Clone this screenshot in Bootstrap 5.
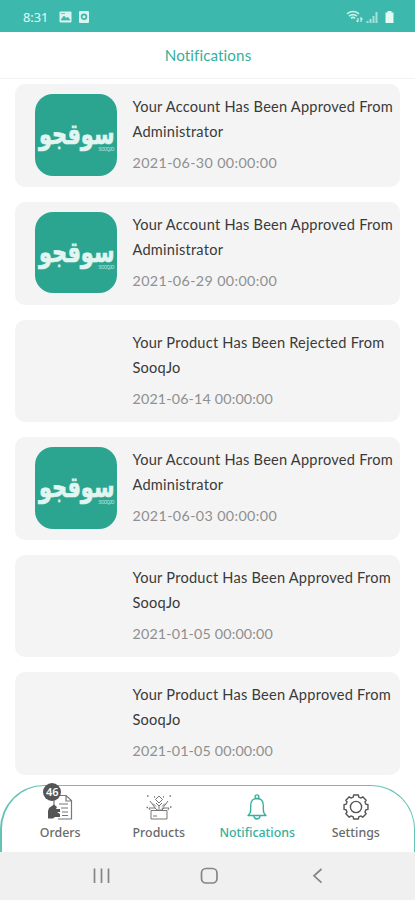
<!DOCTYPE html>
<html lang="en">
<head>
<meta charset="utf-8">
<meta name="viewport" content="width=device-width, initial-scale=1">
<title>Notifications</title>
<link href="https://cdn.jsdelivr.net/npm/bootstrap@5.3.0/dist/css/bootstrap.min.css" rel="stylesheet">
<style>
  :root { --teal: #3cb8ac; --accent: #35b09c; }
  body { font-family: Lato, "Noto Sans", sans-serif; width: 415px; height: 900px; }
  svg { display: block; }
  .status-strip { height: 32px; background: var(--teal); color: #e4faf5; padding: 2px 19px 0 23px; }
  .status-icons { gap: 7px; }
  .clock { font: 12.8px/1 "Noto Sans", sans-serif; width: 29px; }
  .title-strip { height: 47px; border-bottom: 1px solid #f3f3f3; color: var(--accent); font-size: 15.2px; letter-spacing: .1px; padding-left: 1px; }
  .feed { padding: 5.4px 15px 0; gap: 15px; }
  .notice { height: 102.6px; background: #f4f4f4; border-radius: 10px; padding: 10px 0 0 20px; gap: 16px; }
  .logo-slot { width: 81.5px; height: 81.5px; flex: none; }
  .logo-tile { background: #2ba590; border-radius: 18px; }
  .logo-name { font: 700 29px "DejaVu Sans", sans-serif; fill: #e2f5f0; stroke: #e2f5f0; stroke-width: .7px; }
  .logo-sub { font: 700 4.5px "Liberation Sans", sans-serif; fill: #9bd5c9; }
  .notice-text { font-size: 14.6px; line-height: 25px; letter-spacing: .23px; color: #3a3a3a; white-space: nowrap; }
  .notice-date { font-size: 14.3px; line-height: 25px; letter-spacing: .37px; color: #8f8f8f; margin-top: 6px; }
  .date-tight { letter-spacing: .15px; }
  .tabs { height: 67px; border: 1px solid #66c2b5; border-left-width: 2px; border-bottom: 0; border-radius: 44px 44px 0 0; padding: 0 9px; }
  .tab { padding-top: 8px; font: 500 12.4px/16px "Noto Sans", sans-serif; color: #6a6a6a; gap: 5px; }
  .tab.on { color: var(--accent); }
  .counter { left: -4px; top: -11px; width: 18px; height: 18px; background: #555; color: #fff; font: 600 11px/18px "Noto Sans", sans-serif; }
  .system-bar { height: 48px; background: #f0f0f0; color: #858585; }
  .system-bar svg { flex: none; }
</style>
</head>
<body class="bg-white overflow-hidden d-flex flex-column m-0">
<header class="status-strip d-flex align-items-center justify-content-between">
  <div class="status-icons d-flex align-items-center">
    <span class="clock">8:31</span>
    <svg width="13" height="12" viewBox="0 0 13 12"><rect x=".5" y=".5" width="12" height="11" rx="1" fill="#d9f5ef"/><path d="M2 9l3-4 2 2.500 1.500-1.500L11 9zM2 2.500h4" fill="#3cb8ac" stroke="#3cb8ac" stroke-width=".7"/></svg>
    <svg width="10" height="12" viewBox="0 0 10 12"><rect width="10" height="12" rx="1" fill="#d9f5ef"/><circle cx="5" cy="5.700" r="2.400" fill="none" stroke="#3cb8ac" stroke-width="1.700"/></svg>
  </div>
  <svg width="50" height="14" viewBox="0 0 50 14" fill="none" stroke="#ccefe8">
    <path d="M1 3.800Q7-.8 13 3.800M3 6.200Q7 3 11 6.200M5 8.300Q7 6.500 9 8.300" stroke-width="1.600"/>
    <path d="M12 8v4m-1.500-1.500l1.500 1.500M15 12V8l1.500 1.500" stroke-width="1.200"/>
    <path d="M21.500 11v2M24.500 9v4M27.500 6v7M30.500 2v11" stroke-width="2" opacity=".75"/>
    <path d="M39.500 2.500h2V1h4v1.500h2V13h-8z" fill="#e4faf5" stroke="none"/>
  </svg>
</header>
<div class="title-strip d-flex align-items-center justify-content-center">Notifications</div>

<main class="feed d-flex flex-column flex-grow-1 overflow-hidden">
  <article class="notice d-flex flex-shrink-0">
    <svg class="logo-slot logo-tile" viewBox="0 0 82 82"><text class="logo-name" x="42" y="50" text-anchor="middle" textLength="76" lengthAdjust="spacingAndGlyphs">سوقجو</text><text class="logo-sub" x="64" y="57" textLength="16">SOOQJO</text></svg>
    <div><div class="notice-text">Your Account Has Been Approved From<br>Administrator</div><div class="notice-date">2021-06-30 00:00:00</div></div>
  </article>
  <article class="notice d-flex flex-shrink-0">
    <svg class="logo-slot logo-tile" viewBox="0 0 82 82"><text class="logo-name" x="42" y="50" text-anchor="middle" textLength="76" lengthAdjust="spacingAndGlyphs">سوقجو</text><text class="logo-sub" x="64" y="57" textLength="16">SOOQJO</text></svg>
    <div><div class="notice-text">Your Account Has Been Approved From<br>Administrator</div><div class="notice-date">2021-06-29 00:00:00</div></div>
  </article>
  <article class="notice d-flex flex-shrink-0">
    <div class="logo-slot"></div>
    <div><div class="notice-text">Your Product Has Been Rejected From<br>SooqJo</div><div class="notice-date date-tight">2021-06-14 00:00:00</div></div>
  </article>
  <article class="notice d-flex flex-shrink-0">
    <svg class="logo-slot logo-tile" viewBox="0 0 82 82"><text class="logo-name" x="42" y="50" text-anchor="middle" textLength="76" lengthAdjust="spacingAndGlyphs">سوقجو</text><text class="logo-sub" x="64" y="57" textLength="16">SOOQJO</text></svg>
    <div><div class="notice-text">Your Account Has Been Approved From<br>Administrator</div><div class="notice-date">2021-06-03 00:00:00</div></div>
  </article>
  <article class="notice d-flex flex-shrink-0">
    <div class="logo-slot"></div>
    <div><div class="notice-text">Your Product Has Been Approved From<br>SooqJo</div><div class="notice-date date-tight">2021-01-05 00:00:00</div></div>
  </article>
  <article class="notice d-flex flex-shrink-0">
    <div class="logo-slot"></div>
    <div><div class="notice-text">Your Product Has Been Approved From<br>SooqJo</div><div class="notice-date date-tight">2021-01-05 00:00:00</div></div>
  </article>
</main>

<nav class="tabs d-flex flex-shrink-0 bg-white">
  <div class="tab col d-flex flex-column align-items-center">
    <div class="position-relative">
      <svg width="26" height="26" viewBox="0 0 26 26" fill="none" stroke="#777" stroke-width="1.200"><path d="M7 13V1.500h12l5.500 5V25H11M19 1.500V7h5.500M12 10h9M14 14h7M15 18h6M15 21.500h6"/><path d="M1 17l1-3 5-3.500 3 2.500-1 2h4v3h-3l3 2v3H8l-2 1.500H1z" fill="#555" stroke="none"/></svg>
      <span class="counter position-absolute rounded-circle text-center">46</span>
    </div>
    <span>Orders</span>
  </div>
  <div class="tab col d-flex flex-column align-items-center">
    <svg width="26" height="26" viewBox="0 0 26 26" fill="none" stroke="#777" stroke-width="1"><path d="M5 16.500h16V25H5zM4 16l-1-2h6l2 2h5l2-2h5l-1 2M7 22h4M10 15L4 7M16 15l6-8M7 9.500l3 3M19 9.500l-3 3M13 15v-4"/><path d="M13 2l3.500 3.500L13 9 9.500 5.500zM10 9l3 3 3-3"/><path d="M1 2h1.500M23.500 2H25M.5 13.500H2M24 13h1.500M8 3h1M17 3h1" stroke-width="1.500"/></svg>
    <span>Products</span>
  </div>
  <div class="tab on col d-flex flex-column align-items-center">
    <svg width="26" height="26" viewBox="0 0 26 26" fill="none" stroke="#35b09c" stroke-width="1.350" stroke-linejoin="round"><circle cx="13" cy="2.700" r="1.900"/><path d="M4 21.500c2-1.500 2.700-3 2.700-6v-4C6.700 7 9 4.500 13 4.500s6.300 2.500 6.300 7v4c0 3 .7 4.500 2.700 6zM10 21.800c0 4.200 6 4.200 6 0"/></svg>
    <span>Notifications</span>
  </div>
  <div class="tab col d-flex flex-column align-items-center">
    <svg width="26" height="26" viewBox="-13 -13 26 26" fill="none" stroke="#555" stroke-width="1.400" stroke-linejoin="round"><circle r="5.600"/><path id="gear"/></svg>
    <span>Settings</span>
  </div>
</nav>
<footer class="system-bar flex-shrink-0 d-flex align-items-center">
  <svg width="415" height="48" viewBox="0 0 415 48" fill="none" stroke="currentColor" stroke-width="1.700"><path d="M94.500 16.500v14.500M101.500 16.500v14.500M108.500 16.500v14.500"/><rect x="201.500" y="16.500" width="15.500" height="14.500" rx="4.500"/><path d="M321.500 17l-7.500 6.800 7.500 6.800"/></svg>
</footer>
<script src="https://cdn.jsdelivr.net/npm/bootstrap@5.3.0/dist/js/bootstrap.bundle.min.js"></script>
<script>
  // Eight evenly spaced teeth around the settings wheel
  let d = "";
  for (let i = 0; i < 8; i++) {
    for (const [a, r] of [[-.27, 10.3], [-.2, 12.2], [.2, 12.2], [.27, 10.3]]) {
      const t = a + i * Math.PI / 4 - Math.PI / 2;
      d += (d ? "L" : "M") + (r * Math.cos(t)).toFixed(2) + " " + (r * Math.sin(t)).toFixed(2);
    }
  }
  document.getElementById("gear").setAttribute("d", d + "Z");
</script>
</body>
</html>
